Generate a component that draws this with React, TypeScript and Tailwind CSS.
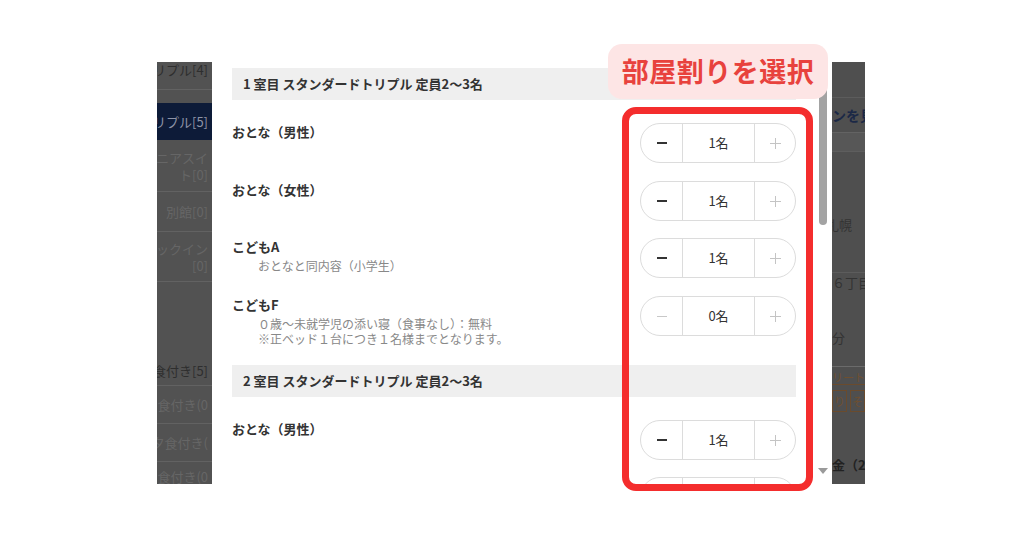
import React from 'react';

interface Guest {
  label: string;
  notes?: string[];
  value: number;
  canDec: boolean;
}

const room1: Guest[] = [
  { label: 'おとな（男性）', value: 1, canDec: true },
  { label: 'おとな（女性）', value: 1, canDec: true },
  { label: 'こどもA', notes: ['おとなと同内容（小学生）'], value: 1, canDec: true },
  {
    label: 'こどもF',
    notes: ['０歳〜未就学児の添い寝（食事なし）：無料', '※正ベッド１台につき１名様までとなります。'],
    value: 0,
    canDec: false,
  },
];

const Stepper = ({ value, canDec }: { value: number; canDec: boolean }) => (
  <div className="flex h-[40px] w-[156px] shrink-0 rounded-full border border-[#dcdcdc]">
    <div className="flex w-[42px] items-center justify-center border-r border-[#dcdcdc]">
      <span className={canDec ? 'h-[2px] w-[10px] bg-[#333]' : 'h-px w-[10px] bg-[#c8c8c8]'} />
    </div>
    <div className="flex flex-1 items-center justify-center text-[13px] text-[#333]">{value}名</div>
    <div className="flex w-[41px] items-center justify-center border-l border-[#dcdcdc]">
      <svg width="11" height="11" viewBox="0 0 11 11">
        <path d="M5.5 0v11M0 5.5h11" stroke="#c4c4c4" strokeWidth="1" />
      </svg>
    </div>
  </div>
);

const GuestRow = ({ guest, className }: { guest: Guest; className: string }) => (
  <div className={`flex shrink-0 items-start justify-between ${className}`}>
    <div>
      <div className="text-[13px] font-bold leading-[18px] text-[#333]">{guest.label}</div>
      {guest.notes && (
        <div className="mt-[2px] pl-[26px] text-[12px] leading-[15px] text-[#888]">
          {guest.notes.map((n) => (
            <div key={n}>{n}</div>
          ))}
        </div>
      )}
    </div>
    <Stepper value={guest.value} canDec={guest.canDec} />
  </div>
);

const RoomHeader = ({ text, className }: { text: string; className: string }) => (
  <div className={`flex h-[32px] shrink-0 items-center bg-[#efefef] pl-[11px] text-[13px] font-bold text-[#333] ${className}`}>
    {text}
  </div>
);

const SideItem = ({ text, h, faint, line = true }: { text: string; h: string; faint?: boolean; line?: boolean }) => (
  <div className={`flex shrink-0 items-center justify-end overflow-hidden whitespace-nowrap pr-[4px] text-[13px] leading-[16px] ${h} ${line ? 'border-b border-[#626262]' : ''} ${faint ? 'text-[#666]' : 'text-[#2e2e2e]'}`}>
    <div className="text-right">{text}</div>
  </div>
);

const LeftStrip = () => (
  <div className="flex w-[55px] shrink-0 flex-col overflow-hidden bg-[#525252]">
    <SideItem text="トリプル[4]" h="h-[28px] items-start" />
    <div className="mt-[13px] flex h-[37px] shrink-0 items-center justify-end overflow-hidden whitespace-nowrap bg-[#0d1b38] pr-[4px] text-[13px] text-[#8d93a6]">
      トリプル[5]
    </div>
    <div className="flex h-[52px] shrink-0 flex-col items-end justify-center overflow-hidden whitespace-nowrap border-b border-[#626262] pr-[4px] text-[13px] leading-[17px] text-[#666]">
      <div>シニアスイ</div>
      <div>ト[0]</div>
    </div>
    <SideItem text="別館[0]" h="h-[40px]" faint />
    <div className="flex h-[50px] shrink-0 flex-col items-end justify-center overflow-hidden whitespace-nowrap border-b border-[#626262] pr-[4px] text-[13px] leading-[17px] text-[#666]">
      <div>チェックイン</div>
      <div>[0]</div>
    </div>
    <div className="h-[74px] shrink-0" />
    <SideItem text="朝食付き[5]" h="h-[30px]" />
    <SideItem text="夕食付き(0" h="h-[38px]" faint />
    <SideItem text="朝夕食付き(" h="h-[38px]" faint />
    <SideItem text="食付き(0" h="h-[30px]" faint line={false} />
  </div>
);

const RightStrip = () => (
  <div className="flex w-[33px] shrink-0 flex-col overflow-hidden whitespace-nowrap bg-[#4f4f4f] text-[13px] [&>*]:shrink-0">
    <div className="h-[36px] border-b border-[#5c5c5c]" />
    <div className="flex h-[34px] items-center text-[14px] font-bold text-[#1b2846]">ンを見る</div>
    <div className="h-[19px] border-t border-[#636363] bg-[#575757]" />
    <div className="h-[64px] border-t border-[#5e5e5e]" />
    <div className="-ml-[6px] h-[20px] leading-[20px] text-[#333]">札幌</div>
    <div className="h-[38px] border-b border-[#5c5c5c]" />
    <div className="h-[20px] leading-[20px] text-[#333]">６丁目</div>
    <div className="h-[35px]" />
    <div className="h-[20px] leading-[20px] text-[#333]">分</div>
    <div className="h-[19px] border-b border-[#6b6b6b]" />
    <div className="mt-[2px] h-[16px] border-b border-[#6a4b2d] text-[11px] leading-[16px] text-[#6f4f30]">リート</div>
    <div className="mt-[5px] flex gap-[3px]">
      <div className="flex h-[22px] w-[16px] items-center justify-center border border-[#6a4b2d] text-[11px] text-[#6f4f30]">り</div>
      <div className="flex h-[22px] w-[16px] items-center justify-center border border-[#6a4b2d] text-[11px] text-[#6f4f30]">そ</div>
    </div>
    <div className="mt-[43px] h-[20px] text-[13px] font-bold leading-[20px] text-[#222]">金（2</div>
  </div>
);

const Modal = () => (
  <div className="flex w-[620px] shrink-0 overflow-hidden bg-white">
    <div className="flex w-[584px] shrink-0 flex-col pl-[20px]">
      <RoomHeader text="1 室目 スタンダードトリプル 定員2〜3名" className="mt-[6px]" />
      <GuestRow guest={room1[0]} className="mt-[23px] h-[40px]" />
      <GuestRow guest={room1[1]} className="mt-[18px] h-[40px]" />
      <GuestRow guest={room1[2]} className="mt-[17px] h-[40px]" />
      <GuestRow guest={room1[3]} className="mt-[18px] h-[50px]" />
      <RoomHeader text="2 室目 スタンダードトリプル 定員2〜3名" className="mt-[19px]" />
      <GuestRow guest={room1[0]} className="mt-[23px] h-[40px]" />
      <div className="mt-[17px] flex h-[40px] shrink-0 justify-end">
        <Stepper value={1} canDec />
      </div>
    </div>
    <div className="ml-[23px] flex w-[8px] flex-col items-center">
      <div className="mt-[4px] h-[159px] w-[8px] shrink-0 rounded-full bg-[#a3a3a3]" />
      <div className="mb-[10px] mt-auto h-0 w-0 border-x-[5px] border-t-[6px] border-x-transparent border-t-[#9a9a9a]" />
    </div>
  </div>
);

export default function App() {
  return (
    <div className="relative h-[538px] w-[1024px] overflow-hidden bg-white pl-[157px] pt-[62px] font-['Noto_Sans_CJK_JP','Noto_Sans',sans-serif]">
      <div className="flex h-[422px] w-[708px] overflow-hidden">
        <LeftStrip />
        <Modal />
        <RightStrip />
      </div>

      {/* callout */}
      <div className="absolute left-[608px] top-[44px] flex h-[55px] w-[220px] items-center justify-center rounded-[14px] bg-[#fde5e5] text-[27px] font-bold tracking-[0.5px] text-[#e8423d]">
        部屋割りを選択
      </div>
      <div className="absolute left-[622px] top-[107px] h-[384px] w-[191px] rounded-[14px] border-[7px] border-[#f42d2d]" />
    </div>
  );
}
